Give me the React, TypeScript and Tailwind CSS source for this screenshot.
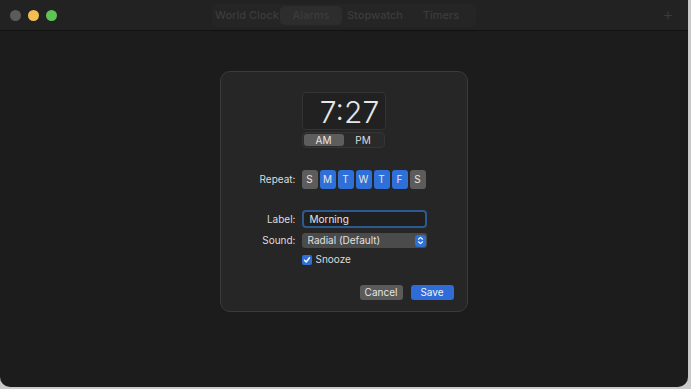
import React from "react";

const days = [
  { l: "S", on: false },
  { l: "M", on: true },
  { l: "T", on: true },
  { l: "W", on: true },
  { l: "T", on: true },
  { l: "F", on: true },
  { l: "S", on: false },
];

export default function App() {
  return (
    <div
      className="w-[691px] h-[389px] bg-[#c9c9c9] flex"
      style={{ fontFamily: "Inter, 'Noto Sans', sans-serif" }}
    >
      <div className="w-[688px] h-[387px] bg-[#1c1c1c] rounded-b-[10px] flex flex-col overflow-hidden">
        {/* Title bar */}
        <div className="h-[31px] bg-[#222222] border-b border-[#111111] flex items-center">
          <div className="w-[60px] flex items-center gap-[7px] pl-[10px]">
            <div className="w-[11px] h-[11px] rounded-full bg-[#5b5b5b]" />
            <div className="w-[11px] h-[11px] rounded-full bg-[#f4bd4f]" />
            <div className="w-[11px] h-[11px] rounded-full bg-[#5dc453]" />
          </div>
          <div className="flex-1 flex justify-center">
            <div className="flex h-[23px] rounded-[6px] bg-[#252525] p-[2px] text-[11px] text-[#3c3c3c] font-medium whitespace-nowrap">
              <div className="w-[66px] flex items-center justify-center">World Clock</div>
              <div className="w-[62px] flex items-center justify-center bg-[#2d2d2d] rounded-[5px]">Alarms</div>
              <div className="w-[66px] flex items-center justify-center">Stopwatch</div>
              <div className="w-[66px] flex items-center justify-center">Timers</div>
            </div>
          </div>
          <div className="w-[60px] flex justify-end pr-[14px] text-[#3a3a3a] text-[18px] font-light leading-none">+</div>
        </div>

        {/* Body */}
        <div className="flex-1 flex justify-center pt-[40px] pr-[1px]">
          <div className="w-[248px] h-[241px] bg-[#262626] border border-[#3b3b3b] rounded-[10px] text-[10px] text-[#dcdcdc] flex flex-col pt-[20px]">
            <div className="grid grid-cols-[75px_1fr] gap-x-[6px]">
              {/* Time */}
              <div />
              <div className="flex flex-col">
                <div className="w-[84px] h-[38px] bg-[#212121] border border-[#333333] rounded-[4px] flex items-center justify-center pl-[12px] pt-[2px] text-[30px] font-light text-[#e6e6e6] leading-none">
                  7:27
                </div>
                <div className="w-[83px] h-[16px] mt-[2px] bg-[#2a2a2a] border border-[#353535] rounded-[4px] flex text-[10px] p-[1px]">
                  <div className="w-[40px] bg-[#5d5d5d] rounded-[3px] flex items-center justify-center text-[#e8e8e8]">AM</div>
                  <div className="flex-1 flex items-center justify-center text-[#dcdcdc]">PM</div>
                </div>
              </div>

              {/* Repeat */}
              <div className="mt-[22px] h-[19px] flex items-center justify-end">Repeat:</div>
              <div className="mt-[22px] flex gap-[2px]">
                {days.map((d, i) => (
                  <div
                    key={i}
                    className={
                      "w-[16px] h-[19px] rounded-[3px] flex items-center justify-center text-[10px] text-[#e8e8e8] " +
                      (d.on ? "bg-[#2f6fd8]" : "bg-[#5c5c5c]")
                    }
                  >
                    {d.l}
                  </div>
                ))}
              </div>

              {/* Label */}
              <div className="mt-[21px] h-[18px] flex items-center justify-end">Label:</div>
              <div className="mt-[21px]">
                <div className="w-[125px] h-[18px] rounded-[4px] bg-[#1f1f1f] border-[2px] border-[#2c5a8f] flex items-center pl-[6px] text-[#e6e6e6]">
                  Morning
                </div>
              </div>

              {/* Sound */}
              <div className="mt-[5px] h-[15px] flex items-center justify-end">Sound:</div>
              <div className="mt-[5px]">
                <div className="w-[125px] h-[15px] rounded-[3px] bg-[#4b4b4b] flex items-center pl-[6px] pr-[1px] text-[#e0e0e0]">
                  <span className="flex-1">Radial (Default)</span>
                  <div className="w-[11px] h-[12px] rounded-[3px] bg-[#2f6fd8] flex items-center justify-center">
                    <svg width="7" height="9" viewBox="0 0 7 9" fill="none" stroke="#ffffff" strokeWidth="1.2" strokeLinecap="round" strokeLinejoin="round">
                      <path d="M1.5 3.2 L3.5 1.4 L5.5 3.2" />
                      <path d="M1.5 5.8 L3.5 7.6 L5.5 5.8" />
                    </svg>
                  </div>
                </div>
              </div>

              {/* Snooze */}
              <div />
              <div className="mt-[6px] flex items-center gap-[4px] h-[11px]">
                <div className="w-[10px] h-[10px] rounded-[2px] bg-[#2f6fd8] flex items-center justify-center">
                  <svg width="8" height="8" viewBox="0 0 8 8" fill="none" stroke="#ffffff" strokeWidth="1.4" strokeLinecap="round" strokeLinejoin="round">
                    <path d="M1.5 4.2 L3.2 6 L6.5 1.8" />
                  </svg>
                </div>
                <span>Snooze</span>
              </div>
            </div>

            {/* Buttons */}
            <div className="flex justify-end gap-[8px] pr-[13px] mt-[20px]">
              <div className="w-[43px] h-[15px] rounded-[3px] bg-[#5a5a5a] flex items-center justify-center text-[#e6e6e6]">Cancel</div>
              <div className="w-[43px] h-[15px] rounded-[3px] bg-[#2f6bd9] flex items-center justify-center text-[#f2f2f2]">Save</div>
            </div>
          </div>
        </div>
      </div>
    </div>
  );
}
